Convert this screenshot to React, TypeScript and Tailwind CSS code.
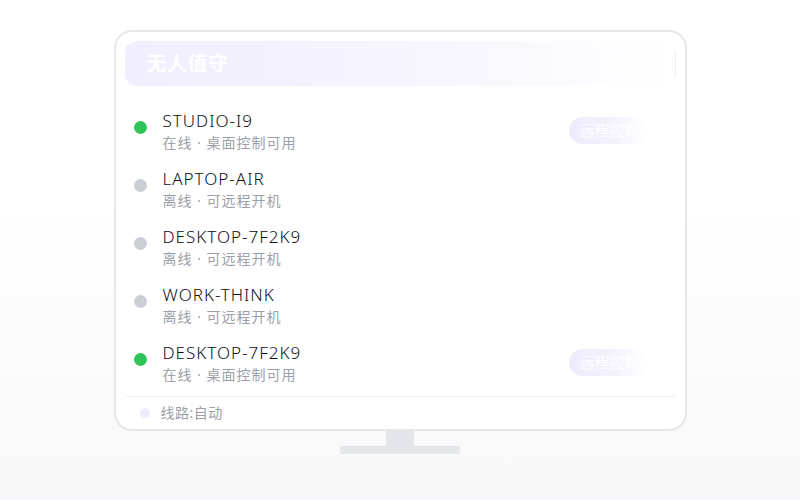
const DEVICES = [
  { name: 'STUDIO-I9', online: true },
  { name: 'LAPTOP-AIR', online: false },
  { name: 'DESKTOP-7F2K9', online: false },
  { name: 'WORK-THINK', online: false },
  { name: 'DESKTOP-7F2K9', online: true },
]

export default function App() {
  return (
    <div
      className="w-[800px] h-[500px] flex flex-col items-center pt-[30px] bg-gradient-to-b from-white from-40% to-[#f8f8fa]"
      style={{ fontFamily: '"Noto Sans", "Noto Sans CJK SC", sans-serif' }}
    >
      {/* Monitor */}
      <div className="w-[573px] h-[401px] rounded-[18px] border-2 border-[#e5e7eb] bg-white px-[9px] pt-[9px] flex flex-col">
        {/* Header */}
        <div className="shrink-0 flex items-center h-[45px] rounded-[12px] bg-gradient-to-r from-[#f1eefe] via-[#f8f6ff] via-60% to-white pl-[22px]">
          <span className="text-[20px] font-bold text-white tracking-[0.5px]">无人值守</span>
          <div className="ml-auto flex items-center gap-[12px] mr-[22px]">
            <span className="w-[6px] h-[6px] rounded-full bg-white" />
            <span className="w-[6px] h-[6px] rounded-full bg-white" />
            <span className="w-[6px] h-[6px] rounded-full bg-white" />
          </div>
          <span className="w-px h-[26px] bg-[#eceef2]" />
        </div>

        {/* Device list */}
        <div className="shrink-0 flex flex-col gap-[14px] mt-[23px] pl-[9px]">
          {DEVICES.map((d, i) => (
            <div key={i} className="flex items-start h-[44px]">
              <span
                className={`mt-[12px] w-[13px] h-[13px] rounded-full shrink-0 ${d.online ? 'bg-[#2fc55a]' : 'bg-[#cbced4]'}`}
              />
              <div className="ml-[16px] flex flex-col">
                <span className="text-[17px] leading-[24px] font-light tracking-[1px] text-[#0b0f17]">{d.name}</span>
                <span className="text-[14px] leading-[20px] tracking-[1px] text-[#9ca0a8]">
                  {d.online ? '在线 · 桌面控制可用' : '离线 · 可远程开机'}
                </span>
              </div>
              {d.online && (
                <div className="ml-auto mr-[25px] mt-[8px] h-[27px] w-[82px] rounded-full bg-gradient-to-r from-[#efebfd] via-[#f5f2fe] via-55% to-white flex items-center pl-[11px]">
                  <span className="text-[15px] text-white/80">远程控制</span>
                </div>
              )}
            </div>
          ))}
        </div>

        {/* Footer */}
        <div className="mt-[11px] flex-1 border-t border-[#eef0f3] mx-px flex items-center">
          <span className="ml-[14px] w-[10px] h-[10px] rounded-full bg-[#efecfd]" />
          <span className="ml-[11px] text-[14px] leading-[20px] tracking-[0.5px] text-[#9ca0a8]">线路:自动</span>
        </div>
      </div>

      {/* Stand */}
      <div className="w-[28px] h-[15px] bg-[#e2e5e9]" />
      <div className="w-[120px] h-[8px] bg-[#e2e5e9]" />
    </div>
  )
}
